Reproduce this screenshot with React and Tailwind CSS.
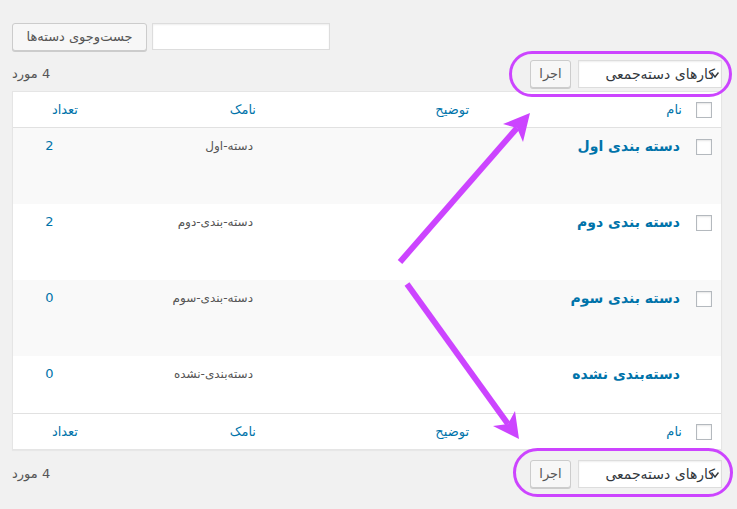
import React from 'react';

const rows = [
  { name: 'دسته بندی اول', slug: 'دسته-اول', count: '2', cb: true, h: 'h-[76px]', shade: true },
  { name: 'دسته بندی دوم', slug: 'دسته-بندی-دوم', count: '2', cb: true, h: 'h-[76px]', shade: false },
  { name: 'دسته بندی سوم', slug: 'دسته-بندی-سوم', count: '0', cb: true, h: 'h-[76px]', shade: true },
  { name: 'دسته‌بندی نشده', slug: 'دسته‌بندی-نشده', count: '0', cb: false, h: 'h-[57px]', shade: false },
];

const Checkbox = () => (
  <span className="block w-4 h-4 bg-white border border-[#b4b9be] shadow-[inset_0_1px_2px_rgba(0,0,0,0.1)]" />
);

const BulkActions = () => (
  <div className="flex items-center gap-[7px]">
    <div className="relative w-[144px] h-[28px] bg-white border border-[#ddd] shadow-[inset_0_1px_2px_rgba(0,0,0,0.07)] flex items-center pr-[6px] text-[14px] text-[#32373c]">
      کارهای دسته‌جمعی
      {/* select arrow */}
      <svg className="absolute right-[2px] top-[11px]" width="8" height="6" viewBox="0 0 8 6">
        <path d="M0.5 0.5 L4 5 L7.5 0.5" fill="none" stroke="#32373c" strokeWidth="1.4" />
      </svg>
    </div>
    <button className="w-[41px] h-[28px] bg-[#f7f7f7] border border-[#ccc] rounded-[3px] shadow-[0_1px_0_#ccc] text-[13px] text-[#555]">
      اجرا
    </button>
  </div>
);

const HeadRow = ({ top }) => (
  <div className={`grid grid-cols-[33px_213px_214px_176px_72px] h-[36px] items-center text-[13px] text-[#0073aa] ${top ? 'border-b' : 'border-t'} border-[#e1e1e1]`}>
    <div className="flex justify-start pr-[9px]"><Checkbox /></div>
    <div className="pr-[6px]">نام</div>
    <div className="pr-[6px]">توضیح</div>
    <div className="pr-[5px]">نامک</div>
    <div className="pr-[7px]">تعداد</div>
  </div>
);

export default function App() {
  return (
    <div
      dir="rtl"
      className="relative w-[737px] h-[509px] bg-[#f1f1f1] overflow-hidden"
      style={{ fontFamily: '"DejaVu Sans", Tahoma, sans-serif' }}
    >
      <div className="pr-[15px] pl-[12px] pt-[23px]">
        {/* search box */}
        <div className="flex justify-end gap-[5px] h-[28px]">
          <div className="w-[178px] h-[27px] bg-white border border-[#ddd] shadow-[inset_0_1px_2px_rgba(0,0,0,0.07)]" />
          <button className="w-[135px] h-[28px] bg-[#f7f7f7] border border-[#ccc] rounded-[3px] shadow-[0_1px_0_#ccc] text-[13px] text-[#555]">
            جست‌وجوی دسته‌ها
          </button>
        </div>

        {/* top tablenav */}
        <div className="flex justify-between items-center mt-[9px] h-[28px]">
          <BulkActions />
          <div className="text-[13px] text-[#555]">4 مورد</div>
        </div>

        {/* table */}
        <div className="mt-[3px] bg-white border border-[#e5e5e5] shadow-[0_1px_1px_rgba(0,0,0,0.04)]">
          <HeadRow top />
          {rows.map((r, i) => (
            <div
              key={i}
              className={`grid grid-cols-[33px_213px_214px_176px_72px] ${r.h} ${r.shade ? 'bg-[#f9f9f9]' : 'bg-white'}`}
            >
              <div className="flex justify-start pr-[9px] pt-[11px]">{r.cb && <Checkbox />}</div>
              <div className="pr-[8px] pt-[7px] leading-[22px] text-[14px] font-bold text-[#0073aa]">{r.name}</div>
              <div />
              <div className="pr-[8px] pt-[8px] leading-[20px] text-[12px] text-[#555]">{r.slug}</div>
              <div className="pt-[8px] leading-[20px] text-[13px] text-[#0073aa] text-center pl-[1px]">{r.count}</div>
            </div>
          ))}
          <HeadRow />
        </div>

        {/* bottom tablenav */}
        <div className="flex justify-between items-center mt-[10px] h-[28px]">
          <BulkActions />
          <div className="text-[13px] text-[#555]">4 مورد</div>
        </div>
      </div>

      {/* annotations */}
      <svg className="absolute inset-0 pointer-events-none" width="737" height="509" viewBox="0 0 737 509">
        <rect x="510.5" y="52.5" width="220" height="43" rx="21.5" fill="none" stroke="#cc44ff" strokeWidth="3" />
        <rect x="514.5" y="449.5" width="217" height="46" rx="23" fill="none" stroke="#cc44ff" strokeWidth="3" />
        <line x1="400" y1="262" x2="517" y2="128" stroke="#cc44ff" strokeWidth="6" />
        <polygon points="530,113 503,124 517,128 523,142" fill="#cc44ff" />
        <line x1="407" y1="284" x2="508" y2="424" stroke="#cc44ff" strokeWidth="6" />
        <polygon points="519,439 493,426 508,424 515,411" fill="#cc44ff" />
      </svg>
    </div>
  );
}
